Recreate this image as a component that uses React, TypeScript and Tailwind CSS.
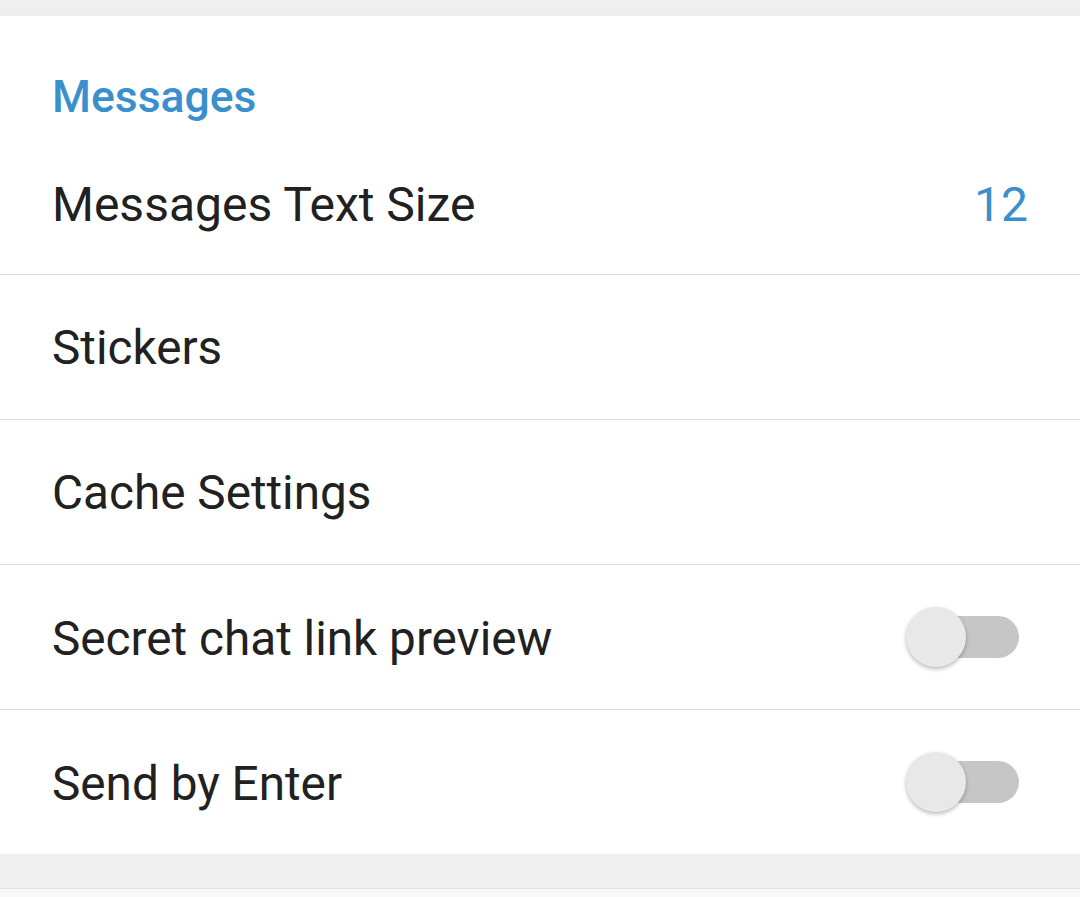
import React from "react";

function Toggle() {
  return (
    <div className="relative w-[113px] h-[60px] flex items-center">
      <div className="absolute right-0 top-[9px] w-[102px] h-[42px] rounded-full bg-[#c6c6c6]" />
      <div className="absolute left-0 top-0 w-[60px] h-[60px] rounded-full bg-[#e8e8e8] shadow-[0_2px_4px_rgba(0,0,0,0.28)]" />
    </div>
  );
}

function Row({ label, right, divider = true }: { label: string; right?: React.ReactNode; divider?: boolean }) {
  return (
    <div className={`h-[145px] flex items-center justify-between pl-[52px] pr-[53px] pt-[3px] ${divider ? "border-b border-[#dadada]" : ""}`}>
      <span className="text-[47.7px] text-[#212121] leading-none">{label}</span>
      {right}
    </div>
  );
}

export default function App() {
  return (
    <div className="w-[1080px] h-[897px] bg-[#efefef] flex flex-col overflow-hidden" style={{ fontFamily: "Roboto, 'Noto Sans', sans-serif" }}>
      <div className="h-[16px] shrink-0 bg-[#efefef]" />
      <div className="bg-white shrink-0 shadow-[0_1px_2px_rgba(0,0,0,0.18)]">
        <div className="h-[115px] flex items-center pl-[52px] pt-[48px]">
          <span className="text-[44.5px] font-medium text-[#3a8fcd] leading-none">Messages</span>
        </div>
        <div className="h-[144px] flex items-center justify-between pl-[52px] pr-[52px] pt-[4px] border-b border-[#dadada]">
          <span className="text-[48px] text-[#212121] leading-none">Messages Text Size</span>
          <span className="text-[48px] text-[#3a8fcd] leading-none">12</span>
        </div>
        <Row label="Stickers" />
        <Row label="Cache Settings" />
        <div className="h-[145px] flex items-center justify-between pl-[52px] pr-[61px] border-b border-[#dadada]">
          <span className="text-[47.7px] text-[#212121] leading-none mt-[6px]">Secret chat link preview</span>
          <Toggle />
        </div>
        <div className="h-[144px] flex items-center justify-between pl-[52px] pr-[61px]">
          <span className="text-[47.7px] text-[#212121] leading-none mt-[6px]">Send by Enter</span>
          <Toggle />
        </div>
      </div>
      <div className="h-[34px] shrink-0 bg-[#efefef]" />
      <div className="flex-1 bg-[#f8f8f8] border-t border-[#e0e0e0]" />
    </div>
  );
}
